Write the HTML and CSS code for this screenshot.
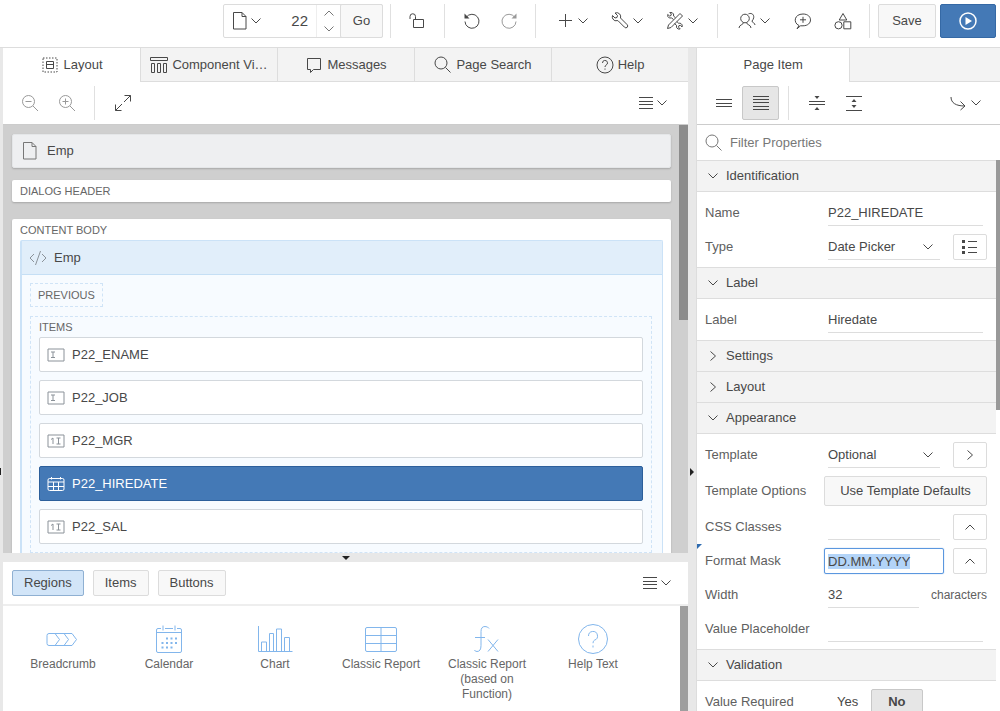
FILE: index.html
```html
<!DOCTYPE html>
<html lang="en">
  <head>
    <meta charset="utf-8">
    <title>Page Designer</title>
    <link rel="stylesheet" href="styles.css">
  </head>
  <body>
    <!-- Shared icons -->
    <svg class="sprite" aria-hidden="true">
      <symbol id="down" viewBox="0 0 10 6"><path d="M.5 .5L5 5L9.500 .5"/></symbol>
      <symbol id="up" viewBox="0 0 10 6"><path d="M.5 5.500L5 1L9.500 5.500"/></symbol>
      <symbol id="right" viewBox="0 0 6 10"><path d="M.5 .5L5.500 5L.5 9.500"/></symbol>
      <symbol id="page" viewBox="0 0 14 18"><path d="M.5 .5h8.500l4 4v12.500h-12.500zM9 .5v4h4"/></symbol>
      <symbol id="lines" viewBox="0 0 14 12"><path d="M0 .5h14M0 4.500h14M0 7.500h14M0 11.500h14"/></symbol>
      <symbol id="search" viewBox="0 0 18 18"><circle cx="7" cy="7" r="6"/><path d="M11.500 11.500l5 5"/></symbol>
      <symbol id="text-field" viewBox="0 0 18 14"><path d="M1 1h16v12h-16zM4 4h4M4 9.500h4M6 4v5.500"/></symbol>
      <symbol id="number-field" viewBox="0 0 18 14"><path d="M1 1h16v12h-16zM4 5.500l2-1.500v6M9.500 4h4M9.500 10h4M11.500 4v6"/></symbol>
    </svg>

    <header class="toolbar">
      <form class="page-select">
        <button type="button" class="page-menu" aria-label="Page finder">
          <svg class="i-page"><use href="#page"/></svg>
          <svg class="i-chevron"><use href="#down"/></svg>
        </button>
        <input type="text" class="page-number" value="22" aria-label="Page number">
        <div class="spinner">
          <button type="button" aria-label="Next page"><svg class="i-chevron"><use href="#up"/></svg></button>
          <button type="button" aria-label="Previous page"><svg class="i-chevron"><use href="#down"/></svg></button>
        </div>
        <button type="button" class="btn go">Go</button>
      </form>
      <div class="group">
        <button class="icon-btn" aria-label="Lock">
          <svg class="i18" viewBox="0 0 18 18"><path d="M4.500 7.500h10v8h-10zM6.500 7.500v-3a2.700 2.700 0 0 0-5.500 0v2.500"/></svg>
        </button>
      </div>
      <div class="group">
        <button class="icon-btn" aria-label="Undo">
          <svg class="i18" viewBox="0 0 18 18"><path d="M3.300 5.200A7 7 0 1 1 2 9.500"/><path class="solid" d="M1.500 1.500v5h5z"/></svg>
        </button>
        <button class="icon-btn faded" aria-label="Redo">
          <svg class="i18" viewBox="0 0 18 18"><path d="M14.700 5.200A7 7 0 1 0 16 9.500"/><path class="solid" d="M16.500 1.500v5h-5z"/></svg>
        </button>
      </div>
      <div class="group">
        <button class="menu-btn" aria-label="Create">
          <svg class="i18" viewBox="0 0 18 18"><path d="M3 8.500h13M9.500 2v13"/></svg>
          <svg class="i-chevron"><use href="#down"/></svg>
        </button>
        <button class="menu-btn" aria-label="Utilities">
          <svg class="i18" viewBox="0 0 18 18"><path d="M1.500 3.500l2.500 2.500 2-.5.5-2-2.500-2.500q3-1 4.700 1 1.500 1.800.8 4l6.500 6.500q1.500 1.500.2 2.800t-2.800-.2l-6.500-6.500q-3.500 1-5-1.500-1-1.800-.4-3.600z"/></svg>
          <svg class="i-chevron"><use href="#down"/></svg>
        </button>
        <button class="menu-btn" aria-label="Settings">
          <svg class="i18" viewBox="0 0 18 18"><path d="M14 1.500l2.500 2.500-11.500 11.500-3.500 1 1-3.500zM7.500 7.500l-1.800-1.500q-3 .6-3.900-1.500-.4-1-.1-2l1.800 1.500 1.500-.5.3-1.500-1.500-1.500q3-.4 3.700 1.500.3 1 0 2l2 1.800M8.500 11.500l2 1.800q-.5 3 1.500 3.600 1 .4 2.200 0l-1.700-1.700.4-1.500 1.500-.4 1.700 1.700q.7-2.500-1.200-3.500-1-.5-2.200-.2l-1.900-1.800"/></svg>
          <svg class="i-chevron"><use href="#down"/></svg>
        </button>
      </div>
      <div class="group wide">
        <button class="menu-btn" aria-label="Team development">
          <svg class="i18" viewBox="0 0 18 18"><circle cx="7" cy="6.500" r="4.300"/><path d="M5.500 10.500c0 2.500-4.500 2-4.500 5.500M8.500 10.500c0 2.500 4.500 2 4.500 5.500M10.500 1.800c3.500-1.200 5.700 1 5.200 4-.2 1.500-1.200 2.500-1.700 3.200 0 2 3 1.500 3 4"/></svg>
          <svg class="i-chevron"><use href="#down"/></svg>
        </button>
        <button class="icon-btn" aria-label="Comments">
          <svg class="i18" viewBox="0 0 18 18"><path d="M5 13.500c-6-2.500-5-11.500 4-11.500 10 0 10 11.800 0 11.800h-2.500l-3.500 3zM6 7.800h6M9 4.800v6"/></svg>
        </button>
        <button class="icon-btn" aria-label="Shared components">
          <svg class="i18" viewBox="0 0 18 18"><path d="M9 1.500l3.800 6.500h-7.600zM9.800 9.800h7v7h-7z"/><circle cx="4.500" cy="13.300" r="3.600"/></svg>
        </button>
      </div>
      <div class="group last">
        <button class="btn save">Save</button>
        <button class="btn run" aria-label="Save and run page">
          <svg class="i18" viewBox="0 0 18 18"><circle cx="9" cy="9" r="8" stroke-width="1.500"/><path class="solid" d="M6.500 5l6.500 4-6.500 4z"/></svg>
        </button>
      </div>
    </header>

    <div class="workspace">
      <button class="edge" aria-label="Expand tree"></button>

      <main class="center">
        <nav class="tabs">
          <a href="#" class="tab active">
            <svg class="i18" viewBox="0 0 18 18"><path stroke-dasharray="1.500 1.500" d="M2 2h14v14h-14z"/><path d="M5.500 5.500h7v7h-7zM5.500 8.500h7"/></svg>
            <span>Layout</span>
          </a>
          <a href="#" class="tab" title="Component View">
            <svg class="i18" viewBox="0 0 18 18"><path d="M.5 1.500h17v3h-17zM1.500 7.500h3v9h-3zM7.500 7.500h3v9h-3zM13.500 7.500h3v9h-3z"/></svg>
            <span>Component Vi…</span>
          </a>
          <a href="#" class="tab">
            <svg class="i18" viewBox="0 0 18 18"><path d="M2.500 2.500h13v11h-7l-3 3v-3h-3z"/></svg>
            <span>Messages</span>
          </a>
          <a href="#" class="tab">
            <svg class="i18"><use href="#search"/></svg>
            <span>Page Search</span>
          </a>
          <a href="#" class="tab">
            <svg class="i18" viewBox="0 0 18 18"><circle cx="9" cy="9" r="8"/><path d="M6.500 7a2.500 2.500 0 1 1 3.500 2.200q-1 .5-1 1.800M9 12.500v1.200"/></svg>
            <span>Help</span>
          </a>
        </nav>
        <div class="sub-toolbar">
          <button class="icon-btn faded" aria-label="Zoom out">
            <svg class="i18" viewBox="0 0 18 18"><circle cx="7.500" cy="7.500" r="6"/><path d="M12 12l5 5M4.500 7.500h6"/></svg>
          </button>
          <button class="icon-btn faded" aria-label="Zoom in">
            <svg class="i18" viewBox="0 0 18 18"><circle cx="7.500" cy="7.500" r="6"/><path d="M12 12l5 5M4.500 7.500h6M7.500 4.500v6"/></svg>
          </button>
          <span class="divider"></span>
          <button class="icon-btn" aria-label="Expand">
            <svg class="i18" viewBox="0 0 18 18"><path d="M10.500 1.500h6v6M16.500 1.500l-6.500 6.500M7.500 16.500h-6v-6M1.500 16.500l6.500-6.500"/></svg>
          </button>
          <button class="menu-btn push" aria-label="Layout menu">
            <svg class="i-lines"><use href="#lines"/></svg>
            <svg class="i-chevron"><use href="#down"/></svg>
          </button>
        </div>

        <div class="canvas-wrap">
          <div class="canvas">
            <div class="page-title"><svg class="i-page"><use href="#page"/></svg>Emp</div>
            <div class="slot">DIALOG HEADER</div>
            <div class="slot content-body">
              <div class="slot-name">CONTENT BODY</div>
              <section class="region">
                <div class="region-title">
                  <svg class="i18" viewBox="0 0 18 18"><path d="M5 5l-4 4 4 4M13 5l4 4-4 4M11.500 2l-5 14"/></svg>Emp
                </div>
                <div class="region-body">
                  <div class="previous">PREVIOUS</div>
                  <div class="items">
                    <div class="slot-name">ITEMS</div>
                    <button class="item"><svg class="i-field"><use href="#text-field"/></svg>P22_ENAME</button>
                    <button class="item"><svg class="i-field"><use href="#text-field"/></svg>P22_JOB</button>
                    <button class="item"><svg class="i-field"><use href="#number-field"/></svg>P22_MGR</button>
                    <button class="item selected">
                      <svg class="i-field" viewBox="0 0 18 14"><rect x="1" y="1.500" width="16" height="12" rx="1.500"/><path d="M1 5h16M1 9.500h16M6.500 5v8.500M11.500 5v8.500M4.500 0v2.500M13.500 0v2.500"/></svg>P22_HIREDATE
                    </button>
                    <button class="item"><svg class="i-field"><use href="#number-field"/></svg>P22_SAL</button>
                  </div>
                </div>
              </section>
            </div>
          </div>
          <div class="track"><div class="thumb canvas-thumb"></div></div>
        </div>

        <button class="splitter-h" aria-label="Collapse gallery"><span></span></button>

        <section class="gallery-pane">
          <div class="gallery-bar">
            <button class="btn pill on">Regions</button>
            <button class="btn pill">Items</button>
            <button class="btn pill">Buttons</button>
            <button class="menu-btn push" aria-label="Gallery menu">
              <svg class="i-lines"><use href="#lines"/></svg>
              <svg class="i-chevron"><use href="#down"/></svg>
            </button>
          </div>
          <div class="gallery-wrap">
            <div class="gallery">
              <button class="card">
                <svg viewBox="0 0 36 36"><path d="M4 12.500h23l4.500 6-4.500 6h-23q-2 0-2-2v-8q0-2 2-2zM10 12.500l4.500 6-4.500 6M19 12.500l4.500 6-4.500 6"/></svg>
                Breadcrumb
              </button>
              <button class="card">
                <svg viewBox="0 0 36 36"><path d="M10 7.500h-3q-1.500 0-1.500 1.500v21q0 1.500 1.500 1.500h22q1.500 0 1.500-1.500v-21q0-1.500-1.500-1.500h-3M14 7.500h8M5.500 11.500h25M12 4.500v5M24 4.500v5"/><path stroke-width="2" stroke-dasharray="2 2.500" d="M15 17.500h11M10.500 22h15.500M10.500 26.500h11"/></svg>
                Calendar
              </button>
              <button class="card">
                <svg viewBox="0 0 36 36"><path d="M1.500 5v25.500h34M4.500 30v-9h5v9M12.500 30v-17.500h4v17.500M19.500 30v-22h5v22M27.500 30v-13.500h5v13.500"/></svg>
                Chart
              </button>
              <button class="card">
                <svg viewBox="0 0 36 36"><rect x="2.500" y="6.500" width="31" height="24" rx="1.500"/><path d="M2.500 14.500h31M2.500 22.500h31M18 6.500v24"/></svg>
                Classic Report
              </button>
              <button class="card">
                <svg viewBox="0 0 36 36"><path d="M20 7.500q-1-2-4-2-4 0-4 5v14q0 6-4 6-2 0-2.500-1.500M6 16.500h10M19 18.500l10 12M29 18.500l-10 12"/></svg>
                Classic Report (based on Function)
              </button>
              <button class="card">
                <svg viewBox="0 0 36 36"><circle cx="18" cy="18" r="14.500"/><path d="M13.500 15a4.500 4.500 0 1 1 6 4.200q-1.500.6-1.500 3M18 24.500v2"/></svg>
                Help Text
              </button>
            </div>
            <div class="track"><div class="thumb gallery-thumb"></div></div>
          </div>
        </section>
      </main>

      <button class="splitter-v" aria-label="Collapse properties"><span></span></button>

      <aside class="properties">
        <nav class="tabs">
          <a href="#" class="tab active single"><span>Page Item</span></a>
          <div class="tab-rest"></div>
        </nav>
        <div class="sub-toolbar">
          <button class="icon-btn" aria-label="Show common">
            <svg class="i18" viewBox="0 0 18 18"><path d="M1 5.500h16M1 9.500h16M1 12.500h16"/></svg>
          </button>
          <button class="icon-btn pressed" aria-label="Show all">
            <svg class="i18" viewBox="0 0 18 18"><path d="M1 2.500h16M1 5.500h16M1 8.500h16M1 12.500h16M1 15.500h16"/></svg>
          </button>
          <span class="divider"></span>
          <button class="icon-btn" aria-label="Collapse all">
            <svg class="i18" viewBox="0 0 18 18"><path d="M1 7.500h16M1 10.500h16"/><path class="solid" d="M6.500 2h5l-2.500 3zM6.500 16h5l-2.500-3z"/></svg>
          </button>
          <button class="icon-btn" aria-label="Expand all">
            <svg class="i18" viewBox="0 0 18 18"><path d="M1 2.500h16M1 16.500h16"/><path class="solid" d="M6.500 8h5l-2.500-3zM6.500 11h5l-2.500 3z"/></svg>
          </button>
          <button class="menu-btn push" aria-label="Go to group">
            <svg class="i18" viewBox="0 0 18 18"><path d="M2 3c0 6 5 9 14 9M11.500 7.500l4.500 4.500-4.500 4"/></svg>
            <svg class="i-chevron"><use href="#down"/></svg>
          </button>
        </div>
        <label class="filter">
          <svg class="i18"><use href="#search"/></svg>
          <input type="text" placeholder="Filter Properties" aria-label="Filter Properties">
        </label>

        <div class="prop-wrap">
          <div class="prop-list">
            <button class="prop-head open"><svg class="i-chevron"><use href="#down"/></svg>Identification</button>
            <div class="prop-body">
              <div class="prop">
                <label for="name">Name</label>
                <div class="field"><input type="text" id="name" value="P22_HIREDATE"></div>
              </div>
              <div class="prop">
                <label for="type">Type</label>
                <div class="field">
                  <div class="select">
                    <select id="type"><option>Date Picker</option></select>
                    <svg class="i-chevron"><use href="#down"/></svg>
                  </div>
                  <button class="side-btn" aria-label="List of types">
                    <svg class="i18" viewBox="0 0 18 18"><path d="M7 3.500h9M7 9.500h9M7 14.500h9"/><path class="solid" d="M1 2h3v3h-3zM1 8h3v3h-3zM1 13h3v3h-3z"/></svg>
                  </button>
                </div>
              </div>
            </div>

            <button class="prop-head open"><svg class="i-chevron"><use href="#down"/></svg>Label</button>
            <div class="prop-body">
              <div class="prop">
                <label for="label">Label</label>
                <div class="field"><input type="text" id="label" value="Hiredate"></div>
              </div>
            </div>

            <button class="prop-head"><svg class="i-right"><use href="#right"/></svg>Settings</button>
            <button class="prop-head"><svg class="i-right"><use href="#right"/></svg>Layout</button>

            <button class="prop-head open"><svg class="i-chevron"><use href="#down"/></svg>Appearance</button>
            <div class="prop-body">
              <div class="prop">
                <label for="template">Template</label>
                <div class="field">
                  <div class="select">
                    <select id="template"><option>Optional</option></select>
                    <svg class="i-chevron"><use href="#down"/></svg>
                  </div>
                  <button class="side-btn" aria-label="Go to template"><svg class="i-right"><use href="#right"/></svg></button>
                </div>
              </div>
              <div class="prop tall">
                <label for="options">Template Options</label>
                <div class="field"><button class="btn defaults" id="options">Use Template Defaults</button></div>
              </div>
              <div class="prop">
                <label for="css">CSS Classes</label>
                <div class="field">
                  <input type="text" id="css">
                  <button class="side-btn" aria-label="Pick CSS classes"><svg class="i-chevron"><use href="#up"/></svg></button>
                </div>
              </div>
              <div class="prop changed">
                <label for="mask">Format Mask</label>
                <div class="field">
                  <input type="text" id="mask" value="DD.MM.YYYY">
                  <button class="side-btn" aria-label="Pick format mask"><svg class="i-chevron"><use href="#up"/></svg></button>
                </div>
              </div>
              <div class="prop">
                <label for="width">Width</label>
                <div class="field"><input type="text" id="width" value="32"><span class="unit">characters</span></div>
              </div>
              <div class="prop">
                <label for="placeholder">Value Placeholder</label>
                <div class="field"><input type="text" id="placeholder"></div>
              </div>
            </div>

            <button class="prop-head open"><svg class="i-chevron"><use href="#down"/></svg>Validation</button>
            <div class="prop-body">
              <div class="prop">
                <span>Value Required</span>
                <div class="field yes-no">
                  <input type="radio" name="required" id="req-yes"><label for="req-yes">Yes</label>
                  <input type="radio" name="required" id="req-no" checked><label for="req-no">No</label>
                </div>
              </div>
            </div>
          </div>
          <div class="track"><div class="thumb prop-thumb"></div></div>
        </div>
      </aside>
    </div>
    <script src="script.js"></script>
  </body>
</html>
```

FILE: styles.css
```css
* {
  box-sizing: border-box;
}
body {
  margin: 0;
  height: 100vh;
  display: flex;
  flex-direction: column;
  overflow: hidden;
  background: #e8e8e8;
  color: #484848;
  font: 13px/16px "Liberation Sans", Arial, Helvetica, sans-serif;
}
button,
input,
select {
  font: inherit;
  color: inherit;
  margin: 0;
  padding: 0;
  border: 0;
  background: none;
}
a {
  color: inherit;
  text-decoration: none;
}
svg {
  flex: none;
  fill: none;
  stroke: currentColor;
}
.solid {
  fill: currentColor;
  stroke: none;
}
.sprite {
  display: none;
}

/* Icon sizes */
.i18 {
  width: 18px;
  height: 18px;
}
.i-chevron {
  width: 10px;
  height: 6px;
}
.i-right {
  width: 6px;
  height: 10px;
}
.i-page {
  width: 14px;
  height: 18px;
}
.i-lines {
  width: 14px;
  height: 12px;
}
.i-field {
  width: 18px;
  height: 14px;
}

/* Buttons */
.btn {
  background: #f8f8f8;
  border: 1px solid #dcdcdc;
  border-radius: 2px;
}
.icon-btn,
.menu-btn {
  display: flex;
  align-items: center;
  justify-content: center;
  gap: 4px;
  height: 34px;
}
.icon-btn {
  width: 37px;
}
.menu-btn {
  width: 55px;
}
.faded {
  color: #999;
}
.push {
  margin-left: auto;
}

/* Top toolbar */
.toolbar {
  flex: none;
  display: flex;
  justify-content: flex-end;
  height: 48px;
  padding: 4px 4px 9px 0;
  background: #fff;
  border-bottom: 1px solid #ddd;
}
.page-select {
  display: flex;
  width: 160px;
  height: 34px;
  margin-right: 7px;
  border: 1px solid #dcdcdc;
  border-radius: 2px;
}
.page-menu {
  display: flex;
  align-items: center;
  justify-content: center;
  gap: 4px;
  width: 46px;
}
.page-number {
  flex: 1;
  min-width: 0;
  padding-right: 8px;
  text-align: right;
  font-size: 15px;
}
.spinner {
  display: flex;
  flex-direction: column;
  width: 25px;
  border-left: 1px solid #eee;
  color: #777;
}
.spinner button {
  flex: 1;
  display: flex;
  align-items: center;
  justify-content: center;
}
.go {
  width: 43px;
  margin: -1px;
}
.group {
  display: flex;
  height: 34px;
  padding: 0 8px;
  border-left: 1px solid #e0e0e0;
}
.group.wide {
  gap: 3px;
}
.group.last {
  gap: 4px;
  padding-right: 0;
}
.save {
  width: 58px;
}
.run {
  display: flex;
  align-items: center;
  justify-content: center;
  width: 56px;
  background: #4479b6;
  border-color: #3569a5;
  color: #fff;
}

/* Panes */
.workspace {
  flex: 1;
  min-height: 0;
  display: flex;
}
.edge {
  width: 3px;
  display: flex;
  align-items: center;
}
.edge::before {
  content: "";
  width: 1px;
  height: 7px;
  margin-top: 184px;
  background: #222;
}
.center {
  flex: 1;
  min-width: 0;
  display: flex;
  flex-direction: column;
}
.splitter-v {
  width: 9px;
  display: flex;
  align-items: center;
  justify-content: center;
  border-right: 1px solid #ddd;
}
.splitter-v span {
  margin-top: 184px;
  border: 4px solid transparent;
  border-right: 0;
  border-left-color: #222;
}
.splitter-h {
  flex: none;
  display: flex;
  align-items: center;
  justify-content: center;
  height: 9px;
}
.splitter-h span {
  border: 4px solid transparent;
  border-bottom: 0;
  border-top-color: #222;
}
.track {
  flex: none;
  width: 9px;
}
.thumb {
  background: #8c8c8c;
}

/* Tabs */
.tabs {
  flex: none;
  display: flex;
  height: 34px;
}
.tab {
  flex: 1;
  min-width: 0;
  display: flex;
  align-items: center;
  justify-content: center;
  gap: 4px;
  padding: 0 9px;
  background: #f3f3f3;
  border-left: 1px solid #ddd;
  border-bottom: 1px solid #ddd;
}
.tab span {
  white-space: nowrap;
}
.tab.active {
  background: #fff;
  border-color: #fff;
}
.tab-rest {
  flex: 1;
  background: #f3f3f3;
  border-left: 1px solid #ddd;
  border-bottom: 1px solid #ddd;
}
.tab.single {
  flex: none;
  width: 50%;
}
.sub-toolbar {
  flex: none;
  display: flex;
  padding: 4px 8px;
  background: #fff;
  border-bottom: 1px solid #ccc;
}
.sub-toolbar .divider {
  width: 1px;
  margin: 0 9px;
  background: #e0e0e0;
}

/* Layout canvas */
.canvas-wrap {
  flex: 1;
  min-height: 0;
  display: flex;
  background: #cfcfcf;
}
.canvas {
  flex: 1;
  padding: 9px 8px 0 9px;
  overflow: hidden;
}
.canvas-thumb {
  height: 195px;
}
.page-title,
.region-title {
  display: flex;
  align-items: center;
  gap: 10px;
  height: 34px;
  padding-left: 10px;
}
.page-title {
  background: #eeeff1;
  border: 1px solid #e4e6e8;
  border-radius: 2px;
  box-shadow: 0 1px 2px rgba(0, 0, 0, 0.2);
}
.page-title svg {
  color: #777;
}
.slot {
  margin-top: 12px;
  padding: 3px 8px;
  background: #fff;
  border-radius: 2px;
  box-shadow: 0 1px 2px rgba(0, 0, 0, 0.2);
  font-size: 11px;
  color: #666;
}
.content-body {
  margin-top: 17px;
}
.slot-name {
  font-size: 11px;
  color: #666;
}
.region {
  margin-top: 2px;
  border: 1px solid #cbe2f7;
  border-width: 1px 1px 0 2px;
  border-radius: 2px 2px 0 0;
  background: #f7fbff;
  font-size: 13px;
  color: #484848;
}
.region-title {
  gap: 7px;
  padding-left: 7px;
  background: #e1eefa;
  border-bottom: 1px solid #c5dff5;
}
.region-title svg,
.item svg {
  color: #8b9299;
}
.region-body {
  padding: 8px 10px 24px 8px;
}
.previous {
  display: inline-block;
  padding: 3px 7px;
  border: 1px dashed #d0e4f7;
  font-size: 11px;
  color: #666;
}
.items {
  display: flex;
  flex-direction: column;
  gap: 8px;
  margin-top: 9px;
  padding: 2px 8px 8px;
  border: 1px dashed #d0e4f7;
}
.items .slot-name {
  margin-bottom: -6px;
}
.item {
  display: flex;
  align-items: center;
  gap: 7px;
  height: 35px;
  padding-left: 7px;
  background: #fff;
  border: 1px solid #d3d8dd;
  border-radius: 2px;
}
.item.selected {
  background: #4479b6;
  border-color: #2c5f9b;
  color: #fff;
}
.item.selected svg {
  color: #fff;
}

/* Gallery */
.gallery-pane {
  flex: none;
  height: 149px;
  display: flex;
  flex-direction: column;
  background: #fff;
}
.gallery-bar {
  display: flex;
  align-items: center;
  gap: 9px;
  height: 44px;
  padding: 0 4px 0 9px;
  border-bottom: 2px solid #eee;
}
.pill {
  height: 26px;
  padding: 0 11px;
}
.pill.on {
  background: #d2e5f8;
  border-color: #8fb0d2;
}
.gallery-wrap {
  flex: 1;
  min-height: 0;
  display: flex;
}
.gallery {
  flex: 1;
  display: grid;
  grid-template-columns: repeat(auto-fill, 106px);
  align-content: start;
  padding: 15px 0 0 7px;
}
.card {
  display: flex;
  flex-direction: column;
  align-items: center;
  padding: 0 8px;
  font-size: 12px;
  line-height: 15px;
  color: #666;
}
.card svg {
  width: 36px;
  height: 36px;
  stroke: #82b6ec;
}
.gallery-thumb {
  height: 100%;
  margin-left: 1px;
  background: #9e9e9e;
}

/* Property editor */
.properties {
  flex: none;
  width: 303px;
  display: flex;
  flex-direction: column;
  background: #fff;
}
.pressed {
  background: #e6e6e6;
  border: 1px solid #c8c8c8;
  border-radius: 2px;
}
.filter {
  flex: none;
  display: flex;
  align-items: center;
  gap: 7px;
  height: 35px;
  padding: 0 8px;
  color: #777;
}
.filter input {
  flex: 1;
  outline: none;
}
.filter input::placeholder {
  color: #777;
  opacity: 1;
}
.prop-wrap {
  flex: 1;
  min-height: 0;
  display: flex;
}
.prop-list {
  flex: 1;
  overflow: hidden;
}
.prop-wrap .track {
  width: 4px;
}
.prop-thumb {
  height: 250px;
  background: #999;
}
.prop-head {
  display: flex;
  align-items: center;
  gap: 8px;
  width: 100%;
  height: 31px;
  padding-left: 11px;
  background: #f3f3f3;
  border-top: 1px solid #ddd;
}
.prop-head.open {
  height: 32px;
  border-bottom: 1px solid #ddd;
}
.prop-head .i-right {
  margin: 0 2px;
}
.prop-body {
  padding: 4px 9px 3px 0;
}
.prop {
  display: grid;
  grid-template-columns: 119px 1fr;
  align-items: center;
  height: 34px;
  margin-left: 8px;
  color: #606060;
}
.prop.tall {
  height: 38px;
}
.field {
  display: flex;
  align-items: center;
  min-width: 0;
  color: #484848;
}
.field input[type="text"],
.select {
  flex: 1;
  min-width: 0;
  height: 26px;
  margin: 0 4px;
  border-bottom: 1px solid #ddd;
}
/* Focused input keeps its text on the same line as the others */
.field input[type="text"]:focus {
  margin: 0;
  padding: 0 3px;
  border: 1px solid #5b97df;
  border-radius: 2px;
  box-shadow: 0 0 1px #5b97df;
  outline: none;
}
.field input::selection {
  background: #b3d4f8;
  color: #484848;
}
.select {
  display: grid;
  align-items: center;
}
.select select {
  grid-area: 1 / 1;
  width: 100%;
  appearance: none;
}
.select svg {
  grid-area: 1 / 1;
  justify-self: end;
  margin-right: 7px;
  pointer-events: none;
}
.side-btn {
  display: flex;
  align-items: center;
  justify-content: center;
  width: 34px;
  height: 26px;
  margin-left: 9px;
  border: 1px solid #dcdcdc;
  border-radius: 2px;
}
/* Room for the input margin */
input:not(:focus) + .side-btn,
.select + .side-btn {
  margin-left: 9px;
}
.defaults {
  flex: 1;
  height: 30px;
}
.unit {
  margin-left: 8px;
  font-size: 12px;
  color: #606060;
}
/* Blue corner for a modified property */
.changed {
  position: relative;
}
.changed::before {
  content: "";
  position: absolute;
  top: 0;
  left: -8px;
  border-top: 5px solid #2f6cb0;
  border-right: 5px solid transparent;
}
.yes-no input {
  position: absolute;
  opacity: 0;
}
.yes-no label {
  padding: 4px 12px;
  border: 1px solid transparent;
  border-radius: 2px;
}
.yes-no input:checked + label {
  padding: 4px 16px;
  background: #e6e6e6;
  border-color: #c8c8c8;
  font-weight: bold;
}
```

FILE: script.js
```js
// Start with the format mask ready to be typed over
const mask = document.querySelector('#mask');
mask.focus();
mask.select();
```
